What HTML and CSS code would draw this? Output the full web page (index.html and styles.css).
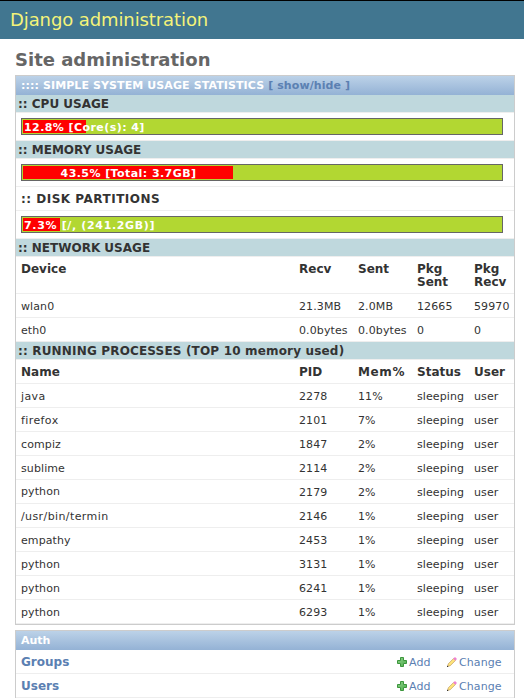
FILE: index.html
```html
<!DOCTYPE html>
<html lang="en">
<head>
<meta charset="utf-8">
<title>Site administration</title>
<link rel="stylesheet" href="styles.css">
</head>
<body>
<svg width="0" height="0" class="defs" aria-hidden="true">
  <defs>
    <linearGradient id="plusfill" x1="0" y1="0" x2="1" y2="1"><stop offset="0" stop-color="#8fd08a"/><stop offset="1" stop-color="#4cae4c"/></linearGradient>
    <symbol id="add" viewBox="0 0 10 10"><path d="M3.5.5h3v3h3v3h-3v3h-3v-3h-3v-3h3z" fill="url(#plusfill)" stroke="#3c963c"/></symbol>
    <symbol id="change" viewBox="0 0 10 10"><path d="M.6 9.400l.7-2.600L6.600 1.500l1.900 1.900L3.200 8.700z" fill="#ffe57a" stroke="#c09a60" stroke-width=".7"/><path d="M6.200 1.800L8 0l2 2-1.800 1.800z" fill="#ee82d0"/><path d="M0 10V8.500L1.500 10z" fill="#222"/></symbol>
  </defs>
</svg>
<header class="header"><h1>Django administration</h1></header>
<main class="content">
  <h2 class="title">Site administration</h2>
  <section class="module">
    <h3 class="caption usage">:::: SIMPLE SYSTEM USAGE STATISTICS <a>[ show/hide ]</a></h3>
    <h4 class="section">:: CPU USAGE</h4>
    <div class="meter-row"><div class="meter"><div class="fill" style="width:63px">12.8% [Core(s): 4]</div></div></div>
    <h4 class="section">:: MEMORY USAGE</h4>
    <div class="meter-row"><div class="meter"><div class="fill" style="width:210px">43.5% [Total: 3.7GB]</div></div></div>
    <h4 class="section plain">:: DISK PARTITIONS</h4>
    <div class="meter-row"><div class="meter"><div class="fill disk" style="width:37px">7.3% [/, (241.2GB)]</div></div></div>
    <h4 class="section">:: NETWORK USAGE</h4>
    <div class="row head tall"><span>Device</span><span>Recv</span><span>Sent</span><span>Pkg Sent</span><span>Pkg Recv</span></div>
    <div class="row"><span>wlan0</span><span>21.3MB</span><span>2.0MB</span><span>12665</span><span>59970</span></div>
    <div class="row"><span>eth0</span><span>0.0bytes</span><span>0.0bytes</span><span>0</span><span>0</span></div>
    <h4 class="section running">:: RUNNING PROCESSES (TOP 10 memory used)</h4>
    <div class="row head"><span>Name</span><span>PID</span><span class="mem">Mem%</span><span>Status</span><span>User</span></div>
    <div class="row"><span class="wide">java</span><span>2278</span><span>11%</span><span>sleeping</span><span>user</span></div>
    <div class="row"><span class="wide">firefox</span><span>2101</span><span>7%</span><span>sleeping</span><span>user</span></div>
    <div class="row"><span>compiz</span><span>1847</span><span>2%</span><span>sleeping</span><span>user</span></div>
    <div class="row"><span>sublime</span><span>2114</span><span>2%</span><span>sleeping</span><span>user</span></div>
    <div class="row"><span class="up">python</span><span>2179</span><span>2%</span><span>sleeping</span><span>user</span></div>
    <div class="row"><span class="wide">/usr/bin/termin</span><span>2146</span><span>1%</span><span>sleeping</span><span>user</span></div>
    <div class="row"><span>empathy</span><span>2453</span><span>1%</span><span>sleeping</span><span>user</span></div>
    <div class="row"><span>python</span><span>3131</span><span>1%</span><span>sleeping</span><span>user</span></div>
    <div class="row"><span>python</span><span>6241</span><span>1%</span><span>sleeping</span><span>user</span></div>
    <div class="row"><span>python</span><span>6293</span><span>1%</span><span>sleeping</span><span>user</span></div>
  </section>
  <section class="module">
    <h3 class="caption">Auth</h3>
    <div class="model"><a class="name">Groups</a><a class="action add"><svg><use href="#add"/></svg>Add</a><a class="action"><svg><use href="#change"/></svg>Change</a></div>
    <div class="model"><a class="name">Users</a><a class="action add"><svg><use href="#add"/></svg>Add</a><a class="action"><svg><use href="#change"/></svg>Change</a></div>
  </section>
</main>
</body>
</html>
```
FILE: styles.css
```css
* { box-sizing: border-box; }
html { overflow: hidden; }
body {
  margin: 0;
  height: 698px;
  overflow: hidden;
  background: #fff;
  color: #333;
  font: 11px/14px "DejaVu Sans", sans-serif;
}
h1, h2, h3, h4 { margin: 0; }
.defs { display: block; }
.header {
  height: 39px;
  padding-left: 10px;
  border-top: 1px solid #000;
  background: #417690;
  color: #f4f379;
}
.header h1 { font-size: 18px; font-weight: normal; line-height: 38px; letter-spacing: -.1px; }
.content { padding: 10px 9px 0 15px; }
.title { height: 26px; color: #666; font-size: 18px; line-height: 22px; }
.module { width: 500px; margin-bottom: 5px; border: 1px solid #ccc; }
.caption {
  height: 19px;
  padding-left: 5px;
  background: linear-gradient(#bcd2e8, #94b2d5);
  color: #fff;
  font-size: 11px;
  line-height: 19px;
  white-space: nowrap;
}
.usage { letter-spacing: .1px; }
.caption a, .model a { color: #5b80b2; }
.section {
  height: 18px;
  padding: 1px 0 0 2px;
  border-bottom: 1px solid #eee;
  background: #bfd8dd;
  font-size: 12px;
  line-height: 16px;
}
.section { line-height: 17px; }
.section.plain { height: 24px; padding-left: 5px; background: #fff; line-height: 23px; letter-spacing: .5px; }
.running { letter-spacing: .17px; }
.meter-row { height: 28px; padding: 5px; border-bottom: 1px solid #eee; }
.meter { width: 482px; height: 17px; padding: 1px; border: 1px solid #666; background: #b2d732; }
.fill {
  height: 13px;
  padding-left: 1px;
  background: #f00;
  color: #fff;
  font-weight: bold;
  line-height: 15px;
  letter-spacing: .43px;
  text-align: center;
  white-space: nowrap;
}
.disk { letter-spacing: .66px; }
.row {
  display: grid;
  grid-template-columns: 278px 59px 59px 57px 45px;
  height: 24px;
  padding-top: 6px;
  border-bottom: 1px solid #eee;
  letter-spacing: .1px;
}
.row span { padding-left: 5px; }
.row .up { margin-top: -1px; }
.row .wide { letter-spacing: .4px; }
.row.head { font-size: 12px; font-weight: bold; line-height: 13px; letter-spacing: 0; }
.row .mem { letter-spacing: .6px; }
.tall { height: 37px; }
.model { display: flex; align-items: flex-start; height: 24px; border-bottom: 1px solid #eee; }
.name { width: 381px; margin-top: 5px; padding-left: 5px; font-size: 12px; font-weight: bold; }
.action { display: flex; margin-top: 6px; letter-spacing: .1px; }
.action svg { width: 10px; height: 10px; margin: 1px 2px 0 0; }
.add { width: 50px; }
```
